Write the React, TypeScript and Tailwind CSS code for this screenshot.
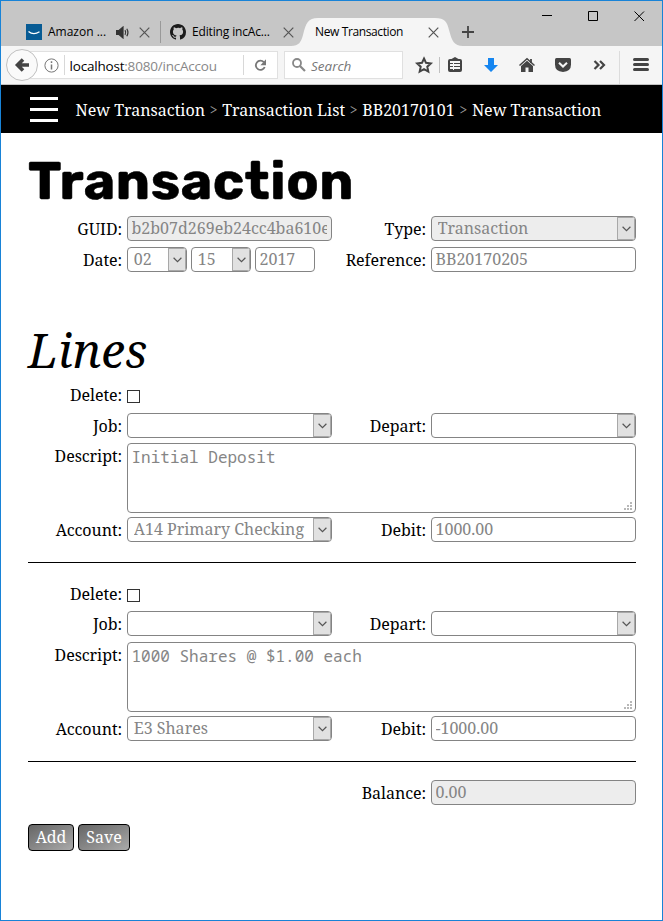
import React from "react";

const serif = "font-['Noto_Serif','Droid_Serif','DejaVu_Serif_Condensed',serif]";
const ui = "font-['Open_Sans',sans-serif]";

function Chevron() {
  return (
    <svg width="9" height="6" viewBox="0 0 9 6" fill="none" stroke="#555" strokeWidth="1.2">
      <path d="M.6 .8 4.5 4.6 8.4 .8" />
    </svg>
  );
}

function Field({ value = "", select = false, disabled = false, width = "w-[205px]" }: {
  value?: string; select?: boolean; disabled?: boolean; width?: string;
}) {
  return (
    <div className={`flex h-[25px] shrink-0 overflow-hidden rounded border border-[#848484] ${width} ${disabled ? "bg-[#ededed]" : "bg-white"} ${select ? "pl-[5.7px]" : "pl-[3.5px] pr-1"}`}>
      <span className="min-w-0 flex-1 overflow-hidden whitespace-nowrap leading-[23px] text-[#858585]">{value}</span>
      {select && (
        <span className="flex w-[18px] items-center justify-center border border-[#a8a8a8] bg-[#e1e1e1]">
          <Chevron />
        </span>
      )}
    </div>
  );
}

function Label({ children, width }: { children: string; width: string }) {
  return <span className={`shrink-0 pt-[2px] text-right leading-[23px] tracking-[-0.06px] ${width}`}>{children}</span>;
}

function Row({ left, right, top }: { left: [string, React.ReactNode]; right: [string, React.ReactNode]; top: string }) {
  return (
    <div className={`flex h-[25px] ${top}`}>
      <Label width="w-[94px]">{left[0]}</Label>
      <div className="ml-[5px] flex w-[205px] gap-1">{left[1]}</div>
      <Label width="w-[94px]">{right[0]}</Label>
      <div className="ml-[5px] flex">{right[1]}</div>
    </div>
  );
}

function Line({ text, account, debit, top, jobTop, textTop }: { text: string; account: string; debit: string; top: string; jobTop: string; textTop: string }) {
  return (
    <section className="border-b border-black pb-5">
      <div className={`flex h-[25px] ${top}`}>
        <Label width="w-[94px]">Delete:</Label>
        <div className="ml-[5px] mt-[8px] size-[13px] border border-[#333] bg-white" />
      </div>
      <Row top={jobTop} left={["Job:", <Field select />]} right={["Depart:", <Field select />]} />
      <div className={`flex h-[70px] ${textTop}`}>
        <Label width="w-[94px]">Descript:</Label>
        <div className="ml-[5px] flex w-[509px] items-end justify-between rounded border border-[#848484] bg-white pl-[3.5px] pr-[3px] pb-[2px]">
          <span className="self-start pt-[2px] font-['Droid_Sans_Mono','Noto_Sans_Mono','Noto_Mono','DejaVu_Sans_Mono',monospace] text-[16px] leading-[23px] text-[#858585]">{text}</span>
          <svg width="8" height="8" viewBox="0 0 8 8" fill="#b8b8b8">
            <path d="M6 0h2v2H6zM3 3h2v2H3zM6 3h2v2H6zM0 6h2v2H0zM3 6h2v2H3zM6 6h2v2H6z" />
          </svg>
        </div>
      </div>
      <Row top="mt-1" left={["Account:", <Field select value={account} />]} right={["Debit:", <Field value={debit} />]} />
    </section>
  );
}

function Cross({ className = "" }: { className?: string }) {
  return (
    <svg className={className} width="11" height="11" viewBox="0 0 11 11" fill="none" stroke="#555" strokeWidth="1.2">
      <path d="m.7.7 9.6 9.6M10.3.7.7 10.3" />
    </svg>
  );
}

function TabStrip() {
  return (
    <div className="relative flex h-[45px] bg-[#c6c6c6] text-[12px] text-black">
      <svg className="absolute left-[290px] top-[17px]" width="172" height="28" viewBox="0 0 172 28">
        <path d="M0 28C8 28 10 24 12 17C15 5 17 0 27 0H144C154 0 156 4 158 12C161 23 163 28 172 28Z" fill="#f5f5f5" />
      </svg>
      <svg className="absolute left-[541px] top-[10px]" width="104" height="11" viewBox="0 0 104 11" fill="none" stroke="#000">
        <path d="M0 4.5h10M46.500.5h9v9h-9zM92.500 .5l9.500 9.500M102 .5 92.500 10" />
      </svg>
      <div className="relative mt-[17px] flex h-7 items-center">
        <svg className="ml-[25px]" width="16" height="16" viewBox="0 0 16 16">
          <rect width="16" height="16" fill="#075b94" />
          <path d="M2.500 7.500c3 2.500 7.500 2.500 11 .3" fill="none" stroke="#fff" strokeWidth="1.300" />
        </svg>
        <span className="ml-[6px] w-[68px] whitespace-nowrap">Amazon ...</span>
        <svg width="14" height="13" viewBox="0 0 14 13" fill="none" stroke="#333" strokeWidth="1.200">
          <path d="M.5 4.500h2.500L7 1v11L3 8.500H.5z" fill="#333" />
          <path d="M9 4.200q1.500 2.300 0 4.600M10.800 2.800q2.200 3.700 0 7.400" />
        </svg>
        <Cross className="ml-[8.500px]" />
        <span className="ml-[10.500px] h-[22px] w-px bg-[#999]" />
        <svg className="ml-[9px]" width="16" height="16" viewBox="0 0 16 16" fill="#1b1b1b">
          <path d="M8 0C3.580 0 0 3.580 0 8c0 3.540 2.290 6.530 5.470 7.590.4.070.55-.17.55-.38v-1.490c-2.010.37-2.530-.49-2.690-.94-.09-.23-.48-.94-.82-1.130-.28-.15-.68-.52-.01-.53.63-.01 1.080.58 1.230.82.72 1.210 1.870.87 2.330.66.07-.52.28-.87.51-1.070-1.780-.2-3.640-.89-3.640-3.950 0-.87.310-1.590.82-2.150-.08-.2-.36-1.020.08-2.120 0 0 .67-.21 2.200.82A7.600 7.600 0 0 1 8 3.860c.68 0 1.360.09 2 .27 1.530-1.040 2.200-.82 2.200-.82.44 1.100.16 1.920.08 2.120.51.56.82 1.270.82 2.150 0 3.070-1.870 3.750-3.650 3.950.29.25.54.73.54 1.480v2.200c0 .21.15.46.55.38A8 8 0 0 0 16 8c0-4.420-3.580-8-8-8Z" />
        </svg>
        <span className="ml-[6px] w-[91px] whitespace-nowrap tracking-[-0.15px]">Editing incAc...</span>
        <Cross />
        <span className="ml-[21px] w-[113px] whitespace-nowrap tracking-[-0.38px]">New Transaction</span>
        <Cross />
        <svg className="ml-[23px]" width="12" height="12" viewBox="0 0 12 12" fill="none" stroke="#444" strokeWidth="1.800">
          <path d="M6 0v12M0 6h12" />
        </svg>
      </div>
    </div>
  );
}

function Toolbar() {
  return (
    <div className="relative flex h-[39px] border-b border-[#c3c3c3] bg-[#f5f5f5] pt-[5px]">
      <svg className="absolute left-[5px] top-[3px]" width="32" height="32" viewBox="0 0 32 32">
        <circle cx="16" cy="16" r="15.500" fill="#fafafa" stroke="#c0c0c0" />
        <path d="M23 16H12M17 10.500l-5.500 5.500 5.500 5.500" fill="none" stroke="#444" strokeWidth="3.600" />
      </svg>
      <div className="ml-[24px] flex h-7 w-[253px] items-center border border-[#e0e0e0] bg-white">
        <svg className="ml-[17.500px]" width="15" height="15" viewBox="0 0 15 15" fill="none" stroke="#777">
          <circle cx="7.500" cy="7.500" r="6.600" />
          <path d="M7.500 6.500v5M7.500 3.300v1.600" strokeWidth="1.500" />
        </svg>
        <span className="ml-[5px] h-5 w-px bg-[#d8d8d8]" />
        <span className="ml-[5px] w-[173px] whitespace-nowrap pt-[2px] text-[13.500px] tracking-[-0.2px] text-[#888]"><span className="text-black">localhost</span>:8080/incAccou</span>
        <span className="h-5 w-px bg-[#d8d8d8]" />
        <svg className="ml-[10px]" width="13" height="13" viewBox="0 0 13 13">
          <path d="M9.800 3.200A4.600 4.600 0 1 0 10.700 8" fill="none" stroke="#777" strokeWidth="1.800" />
          <path d="M12 .3v5.900H6.400z" fill="#777" />
        </svg>
      </div>
      <div className="ml-[6px] flex h-7 w-[119px] items-center border border-[#e0e0e0] bg-white">
        <svg className="ml-[7px]" width="14" height="14" viewBox="0 0 14 14" fill="none" stroke="#888">
          <circle cx="5" cy="5" r="4" strokeWidth="1.800" />
          <path d="m8 8 5 5" strokeWidth="2.200" />
        </svg>
        <span className="ml-[5px] pt-[2px] text-[13.500px] italic text-[#777]">Search</span>
      </div>
      <svg className="ml-[10px]" width="248" height="34" viewBox="413 51 248 34" fill="none" stroke="#444">
        <path d="m424 58.500 2 4.300 4.800.6-3.500 3.300 1 4.800-4.300-2.400-4.300 2.400 1-4.800-3.500-3.300 4.800-.6z" strokeWidth="2" />
        <path d="M439.500 57v16" stroke="#c0c0c0" />
        <rect x="449" y="60" width="12" height="11" rx="1" strokeWidth="2" />
        <path d="M451.500 60.500v-1.500l3.500-2 3.500 2v1.500z" fill="#444" stroke="none" />
        <path d="M450 60.500h10M450 63.500h10M450 66.500h10M450 69.500h10" strokeWidth="1.200" />
        <path d="M453.500 62v8" strokeWidth="1" stroke="#f5f5f5" />
        <path d="M488 58h6v7h4l-7 7-7-7h4z" fill="#1686f0" stroke="none" />
        <path d="m519.500 65.500 7.500-6.800 7.500 6.800" strokeWidth="1.500" />
        <path d="m521 66 6-5.300 6 5.300v6h-4.500v-4.500h-3V72H521z" fill="#444" stroke="none" />
        <path d="M531 59v4" strokeWidth="1.800" />
        <path d="M556.500 58h13q1.500 0 1.500 1.500v5q0 7-8 7.500-8-.5-8-7.500v-5q0-1.500 1.500-1.500z" fill="#444" stroke="none" />
        <path d="m559 62.700 4 3.800 4-3.800" stroke="#f5f5f5" strokeWidth="2" />
        <path d="m594.500 61 4 4-4 4M600 61l4 4-4 4" strokeWidth="2.200" />
        <path d="M619.500 46v38" stroke="#dcdcdc" />
        <path d="M634.500 59.500h13M634.500 64.500h13M634.500 69.500h13" strokeWidth="3" strokeLinecap="round" />
      </svg>
    </div>
  );
}

const crumbs = ["New Transaction", "Transaction List", "BB20170101", "New Transaction"];

export default function App() {
  return (
    <div className={`flex h-[921px] w-[663px] flex-col overflow-hidden border border-[#1883d7] bg-white text-[16px] text-black ${serif}`}>
      <div className={ui}>
        <TabStrip />
        <Toolbar />
      </div>
      <nav className="flex h-12 shrink-0 items-center bg-black text-white">
        <div className="ml-[29px] flex w-7 flex-col gap-2 pt-px">
          <span className="h-[3px] bg-white" />
          <span className="h-[3px] bg-white" />
          <span className="h-[3px] bg-white" />
        </div>
        <div className="ml-[17.500px] flex whitespace-nowrap pt-[2px]">
          {crumbs.map((c, i) => (
            <React.Fragment key={i}>
              {i > 0 && <span className="w-[17.200px] text-center text-[14px] leading-6 text-[#999]">&gt;</span>}
              <span>{c}</span>
            </React.Fragment>
          ))}
        </div>
      </nav>
      <main className="w-[635px] pl-[27px]">
        <h1 className="h-[83px] pt-[16px] font-['Rubik','Inter',sans-serif] text-[53.300px] font-[750] leading-[63px] tracking-[0.600px] [-webkit-text-stroke:0.500px_black]">Transaction</h1>
        <Row top="" left={["GUID:", <Field disabled value="b2b07d269eb24cc4ba610e" />]} right={["Type:", <Field select disabled value="Transaction" />]} />
        <Row
          top="mt-[6px]"
          left={["Date:", <><Field select width="w-[60px]" value="02" /><Field select width="w-[60px]" value="15" /><Field width="w-[60px]" value="2017" /></>]}
          right={["Reference:", <Field value="BB20170205" />]}
        />
        <h2 className="mt-[47px] h-[63px] text-[48px] italic leading-[61px]">Lines</h2>
        <Line top="" jobTop="mt-[6px]" textTop="mt-[5px]" text="Initial Deposit" account="A14 Primary Checking" debit="1000.00" />
        <Line top="mt-[18px]" jobTop="mt-[5px]" textTop="mt-[6px]" text="1000 Shares @ $1.00 each" account="E3 Shares" debit="-1000.00" />
        <div className="mt-[18px] flex h-[25px]">
          <Label width="w-[398px]">Balance:</Label>
          <div className="ml-[5px] flex"><Field disabled value="0.00" /></div>
        </div>
        <div className="mt-[19px] flex gap-1 text-white">
          <button className="h-[27px] w-[46px] rounded border border-black bg-linear-to-br from-[#666] to-[#aaa] pb-px leading-[24px]">Add</button>
          <button className="h-[27px] w-[52px] rounded border border-black bg-linear-to-br from-[#666] to-[#aaa] pb-px leading-[24px]">Save</button>
        </div>
      </main>
    </div>
  );
}
